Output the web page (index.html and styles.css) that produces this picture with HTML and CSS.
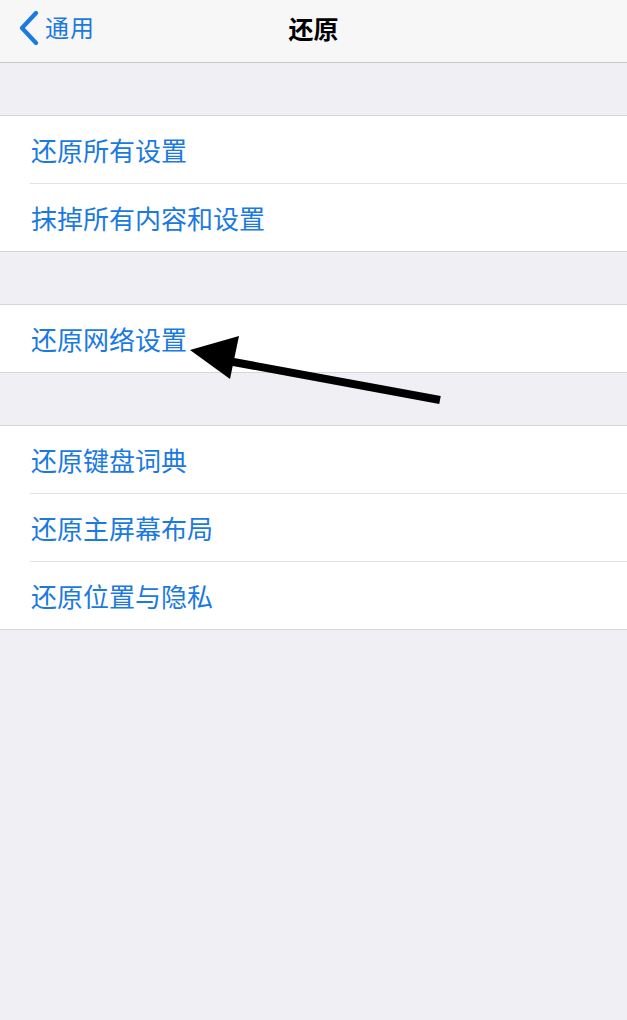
FILE: index.html
```html
<!DOCTYPE html>
<html lang="zh-CN">
<head>
<meta charset="utf-8">
<title>还原</title>
<link rel="stylesheet" href="styles.css">
</head>
<body>
<header class="nav">
  <div class="back">
    <svg class="chev" width="22" height="34" viewBox="0 0 22 34"><path d="M18 2 L4 17 L18 32" fill="none" stroke="#1b7ae0" stroke-width="4.2" stroke-linecap="round" stroke-linejoin="round"/></svg>
    <span>通用</span>
  </div>
  <div class="title">还原</div>
</header>
<main class="content">
  <section class="group">
    <div class="row">还原所有设置</div>
    <div class="row">抹掉所有内容和设置</div>
  </section>
  <section class="group">
    <div class="row">还原网络设置</div>
  </section>
  <section class="group">
    <div class="row">还原键盘词典</div>
    <div class="row">还原主屏幕布局</div>
    <div class="row">还原位置与隐私</div>
  </section>
</main>
<svg class="arrow" width="627" height="1020" viewBox="0 0 627 1020">
  <line x1="228" y1="361" x2="440" y2="400" stroke="#000" stroke-width="8"/>
  <polygon points="190,350 239,336 230,379" fill="#000"/>
</svg>
</body>
</html>
```
FILE: styles.css
```css
html, body {
  margin: 0;
  padding: 0;
}
body {
  width: 627px;
  min-height: 1020px;
  background: #efeff4;
  font-family: "Noto Sans CJK SC", "Noto Sans", sans-serif;
  position: relative;
  overflow: hidden;
}
.nav {
  height: 62px;
  background: #f7f7f8;
  border-bottom: 1px solid #c8c7cc;
  display: flex;
  align-items: center;
  justify-content: center;
  position: relative;
}
.back {
  position: absolute;
  left: 18px;
  top: 11px;
  display: flex;
  align-items: center;
  gap: 5px;
  color: #1b7ae0;
  font-size: 24px;
  line-height: 34px;
}
.back span {
  margin-top: -2px;
  letter-spacing: 1px;
}
.title {
  font-size: 25px;
  font-weight: 700;
  color: #000;
  margin-top: -6px;
}
.content {
  padding-top: 52px;
  display: flex;
  flex-direction: column;
  gap: 52px;
}
.group {
  background: #fff;
  border-top: 1px solid #d6d6da;
  border-bottom: 1px solid #d6d6da;
}
.row {
  height: 67px;
  display: flex;
  align-items: center;
  padding-left: 31px;
  font-size: 26px;
  color: #1b7ae0;
  position: relative;
}
.row + .row {
  border-top: 1px solid #e2e2e5;
  margin-left: 30px;
  padding-left: 1px;
}
.arrow {
  position: absolute;
  left: 0;
  top: 0;
  pointer-events: none;
}
```
